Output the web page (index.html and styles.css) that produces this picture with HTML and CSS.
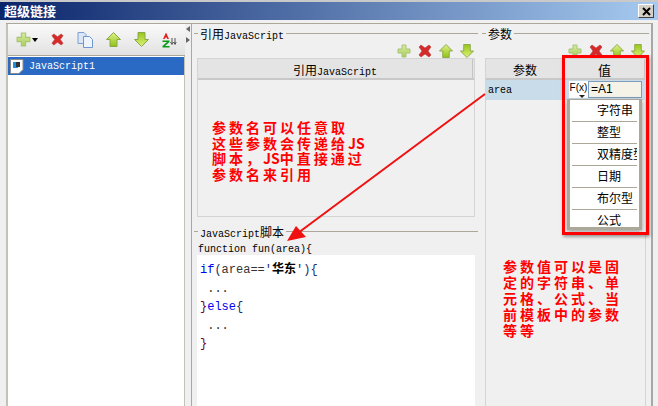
FILE: index.html
```html
<!DOCTYPE html>
<html lang="zh">
<head>
<meta charset="utf-8">
<title>超级链接</title>
<link rel="stylesheet" href="styles.css">
</head>
<body>
<svg class="defs" width="0" height="0" aria-hidden="true">
  <defs>
    <linearGradient id="gp" x1="0" y1="0" x2="0" y2="1"><stop offset="0" stop-color="#d6eba0"/><stop offset="1" stop-color="#a8cf5c"/></linearGradient>
    <linearGradient id="gu" x1="0" y1="0" x2="0" y2="1"><stop offset="0" stop-color="#e0f28a"/><stop offset="1" stop-color="#8fc212"/></linearGradient>
    <linearGradient id="gd" x1="0" y1="0" x2="0" y2="1"><stop offset="0" stop-color="#96c618"/><stop offset="1" stop-color="#e0f27a"/></linearGradient>
    <symbol id="i-plus" viewBox="0 0 14 14"><path d="M5 1h4v4h4v4H9v4H5V9H1V5h4z" fill="url(#gp)" stroke="#a9c477"/></symbol>
    <symbol id="i-x" viewBox="0 0 14 14"><path d="M1 3l2-2 4 3 4-3 2 2-3 4 3 4-2 2-4-3-4 3-2-2 3-4z" fill="#d62a2a" stroke="#b33a3a" stroke-width=".6"/></symbol>
    <symbol id="i-up" viewBox="0 0 15 15"><path d="M7.500 .5l7 7H11v7H4v-7H.5z" fill="url(#gu)" stroke="#8aa64a"/></symbol>
    <symbol id="i-down" viewBox="0 0 15 15"><path d="M7.500 14.500l7-7H11v-7H4v7H.5z" fill="url(#gd)" stroke="#8aa64a"/></symbol>
    <symbol id="i-copy" viewBox="0 0 16 16"><path d="M1 .5h6l2 2v9H1z" fill="#dbe7f7" stroke="#7a9fd4"/><path d="M6.500 4.500h6l3 3v8h-9z" fill="#eef4fc" stroke="#6f96cf"/></symbol>
  </defs>
</svg>
<div class="window">
  <header class="titlebar">
    <span class="title">超级链接</span>
    <span class="close"><svg width="9" height="9" viewBox="0 0 9 9"><path d="M1 1l7 7M8 1L1 8" stroke="#000" stroke-width="2"/></svg></span>
  </header>
  <div class="frame">
    <aside class="left">
      <div class="toolbar">
        <svg class="ic-l"><use href="#i-plus"/></svg>
        <span class="caret"></span>
        <svg class="ic-x"><use href="#i-x"/></svg>
        <svg class="ic-c"><use href="#i-copy"/></svg>
        <svg class="ic-u"><use href="#i-up"/></svg>
        <svg class="ic-d"><use href="#i-down"/></svg>
        <span class="sort">
          <svg width="16" height="16" viewBox="0 0 16 16"><path d="M5 .5L2 7h1.500L5 5l1.500 2H8z" fill="#e02020"/><path d="M1.500 8.500h7v1.500l-4.500 4h4.500v1.500h-7V14L6 10H1.500z" fill="#0a9a16"/><path d="M11 6v6M9.500 10l1.500 2.500L12.500 10M14 6v6M12.800 10l1.200 2.500 1.200-2.500" fill="none" stroke="#555"/></svg>
        </span>
      </div>
      <div class="list">
        <div class="item">
          <svg width="14" height="15" viewBox="0 0 14 15"><path d="M.5.500h12.500v10l-4 4H.5z" fill="#fff" stroke="#8b8b8b"/><path d="M3 3h5v6H3z" fill="#1f8fe0"/><path d="M6 3h4v5H6z" fill="#333"/></svg>
          <span>JavaScript1</span>
        </div>
      </div>
    </aside>
    <div class="splitter"><i class="tri tri-l"></i><i class="tri tri-r"></i></div>
    <main class="mid">
      <div class="legend mono"><span><span class="cjk">引用</span>JavaScript</span></div>
      <div class="icons">
        <svg><use href="#i-plus"/></svg><svg><use href="#i-x"/></svg><svg><use href="#i-up"/></svg><svg><use href="#i-down"/></svg>
      </div>
      <div class="table t-ref">
        <div class="thead"><div class="th"><span class="cjk">引用</span>JavaScript</div></div>
      </div>
      <div class="legend legend-js mono"><span>JavaScript<span class="cjk">脚本</span></span></div>
      <div class="sig mono">function fun(area){</div>
      <pre class="code"><span class="kw">if</span><span class="pn">(</span>area==<span class="pn">'</span><b>华东</b><span class="pn">'){</span>
 ...
<span class="rb">}</span><span class="kw">else</span><span class="pn">{</span>
 ...
<span class="rb">}</span></pre>
    </main>
    <section class="right">
      <div class="legend mono"><span class="cjk">参数</span></div>
      <div class="icons">
        <svg><use href="#i-plus"/></svg><svg><use href="#i-x"/></svg><svg><use href="#i-up"/></svg><svg><use href="#i-down"/></svg>
      </div>
      <div class="table t-param">
        <div class="thead">
          <div class="th th-name"><span class="cjk">参数</span></div>
          <div class="th th-val">值</div>
        </div>
        <div class="row">
          <div class="cell-name mono">area</div>
          <div class="cell-val">
            <span class="fx">F(x)</span>
            <span class="input">=A1</span>
          </div>
        </div>
      </div>
    </section>
  </div>

  <ul class="dropdown">
    <li>字符串</li>
    <li>整型</li>
    <li>双精度型</li>
    <li>日期</li>
    <li>布尔型</li>
    <li>公式</li>
  </ul>
  <div class="redbox"></div>
  <p class="note note-a">参数名可以任意取<br>这些参数会传递给<span class="latin">JS</span><br>脚本，<span class="latin">JS</span>中直接通过<br>参数名来引用</p>
  <p class="note note-b">参数值可以是固<br>定的字符串、单<br>元格、公式、当<br>前模板中的参数<br>等等</p>
  <svg class="arrow" width="658" height="406" viewBox="0 0 658 406">
    <path d="M485 94L298 233" stroke="#f01010" stroke-width="2" fill="none"/>
    <path d="M287 241L296 226 306 237z" fill="#f01010"/>
  </svg>
</div>
</body>
</html>
```
FILE: styles.css
```css
* { box-sizing: border-box; }
html, body { margin: 0; padding: 0; }
body { font-family: "Noto Sans CJK SC", "Liberation Sans", sans-serif; font-size: 12px; color: #000; }
.defs { position: absolute; }
.mono { font-family: "Liberation Mono", "Noto Sans CJK SC", monospace; font-size: 10px; }
.cjk { font-family: "Noto Sans CJK SC", sans-serif; font-size: 12px; }

.window { position: relative; width: 658px; height: 406px; overflow: hidden; background: #f0f0f0; display: flex; flex-direction: column; border-top: 2px solid #c9c9c9; }
.titlebar { height: 18px; flex: none; display: flex; align-items: center; justify-content: space-between; padding: 0 4px 0 4px; background: linear-gradient(90deg, #0a246a, #a6caf0); }
.title { color: #fff; font-weight: 700; font-size: 13px; line-height: 18px; }
.close { width: 16px; height: 14px; background: #d4d0c8; border: 1px solid; border-color: #fff #404040 #404040 #fff; display: flex; align-items: center; justify-content: center; }

.frame { flex: 1; min-height: 0; margin: 3px 5px 0 6px; border-top: 1px solid #aca899; border-right: 2px solid #a8a8a8; display: flex; }

.left { width: 179px; flex: none; display: flex; flex-direction: column; border-left: 2px solid #c4c2b4; }
.toolbar { height: 32px; flex: none; border-bottom: 1px solid #aca899; background: linear-gradient(#fafafa, #e2e2e2); display: flex; align-items: center; padding: 0 0 0 8px; }
.toolbar svg { width: 15px; height: 15px; flex: none; }
.caret { width: 0; height: 0; margin-left: 1px; border: 3.500px solid transparent; border-top: 4px solid #000; border-bottom: 0; }
.toolbar .ic-x { margin-left: 13px; width: 13px; height: 13px; }
.toolbar .ic-c { margin-left: 13px; width: 16px; height: 16px; }
.toolbar .ic-u { margin-left: 13px; }
.toolbar .ic-d { margin-left: 13px; }
.sort { margin-left: 12px; display: flex; }
.toolbar .sort svg { width: 16px; height: 16px; }
.list { flex: 1; background: #fff; padding-top: 1px; border-right: 1px solid #c4c2b4; }
.item { height: 18px; background: #2a6ac4; color: #fff; display: flex; align-items: center; gap: 5px; padding-left: 2px; font-family: "Liberation Mono", monospace; font-size: 10px; }

.splitter { width: 7px; flex: none; border-right: 1px solid #a8a8a8; display: flex; flex-direction: column; align-items: center; gap: 5px; padding-top: 2px; }
.tri { display: block; width: 0; height: 0; border: 3.500px solid transparent; }
.tri-l { border-left: 0; border-right: 4px solid #666; }
.tri-r { border-right: 0; border-left: 4px solid #666; }

.mid { width: 288px; flex: none; display: flex; flex-direction: column; padding-left: 5px; }
.right { flex: 1; min-width: 0; display: flex; flex-direction: column; padding-left: 5px; }

.legend { display: flex; align-items: center; height: 18px; margin-left: -3px; flex: none; gap: 2px; }
.legend::before { content: ""; width: 4px; height: 1px; background: #aca899; flex: none; }
.legend::after { content: ""; flex: 1; height: 1px; background: #aca899; margin-right: 2px; }
.icons { height: 16px; flex: none; display: flex; gap: 7px; justify-content: flex-end; padding: 1px 6px 0 0; align-items: center; }
.icons svg { width: 14px; height: 14px; }

.table { flex: none; border: 1px solid #d4d4d4; background: #f0f0f0; }
.t-ref { width: 278px; height: 159px; }
.t-param { width: 161px; height: 360px; }
.thead { display: flex; height: 21px; background: #e4e4e4; border-bottom: 2px solid #c8c8c8; }
.th { flex: 1; text-align: center; line-height: 22px; height: 19px; font-size: 10px; font-family: "Liberation Mono", "Noto Sans CJK SC", monospace; border-right: 1px solid #c4c4c4; }
.t-ref .th { margin-right: 1px; }
.th-name { flex: none; width: 79px; }
.th-val { flex: 1; font-size: 13px; font-family: "Noto Sans CJK SC", sans-serif; }
.row { display: flex; height: 20px; background: #c9dcea; }
.cell-name { width: 79px; line-height: 22px; padding-left: 2px; }
.cell-val { flex: 1; display: flex; padding: 1px 3px 0 4px; }
.fx { position: relative; width: 19px; height: 17px; background: #fff; font-family: "Liberation Sans", sans-serif; font-size: 10px; line-height: 14px; text-align: center; }
.fx::after { content: ""; position: absolute; right: 3px; bottom: 0; border: 3px solid transparent; border-top: 3px solid #222; border-bottom: 0; }
.input { flex: 1; height: 17px; background: #f5f3e8; border: 1px solid #7f9db9; font-family: "Liberation Sans", sans-serif; font-size: 12px; line-height: 15px; padding-left: 2px; }

.legend-js { margin-top: 5px; }
.sig { height: 13px; line-height: 15px; flex: none; padding-left: 1px; margin-top: 2px; }
.code { flex: 1; width: 278px; margin: 0; background: #fff; padding: 6px 0 0 3px; font-family: "Liberation Mono", "Noto Sans CJK SC", monospace; font-size: 12px; line-height: 18.500px; color: #333; }
.code b { color: #000; }
.kw { color: #0000f0; }
.pn { color: #1a2a6a; }
.rb { color: #700030; }

.dropdown { position: absolute; left: 567px; top: 97px; width: 75px; height: 131px; margin: 0; padding: 0 2px 1px; list-style: none; background: #fff; border: 1px solid #aca899; border-width: 1px 3px 3px; box-shadow: 0 2px 5px rgba(0,0,0,.35); }
.dropdown li { height: 22px; line-height: 20px; border-bottom: 1px solid #aca899; padding-left: 25px; font-size: 12px; white-space: nowrap; overflow: hidden; }
.dropdown li:last-child { border-bottom: 0; }

.redbox { position: absolute; left: 562px; top: 53px; width: 87px; height: 180px; border: 3px solid #f00; box-shadow: 1px 2px 3px rgba(0,0,0,.35); }

.note { position: absolute; margin: 0; color: #f00; font-weight: 700; font-size: 14px; line-height: 15.700px; letter-spacing: 3px; white-space: nowrap; }
.latin { letter-spacing: 0; }
.note-a { left: 212px; top: 118px; }
.note-b { left: 503px; top: 256px; line-height: 16px; }
.arrow { position: absolute; left: 0; top: -2px; pointer-events: none; }
```
